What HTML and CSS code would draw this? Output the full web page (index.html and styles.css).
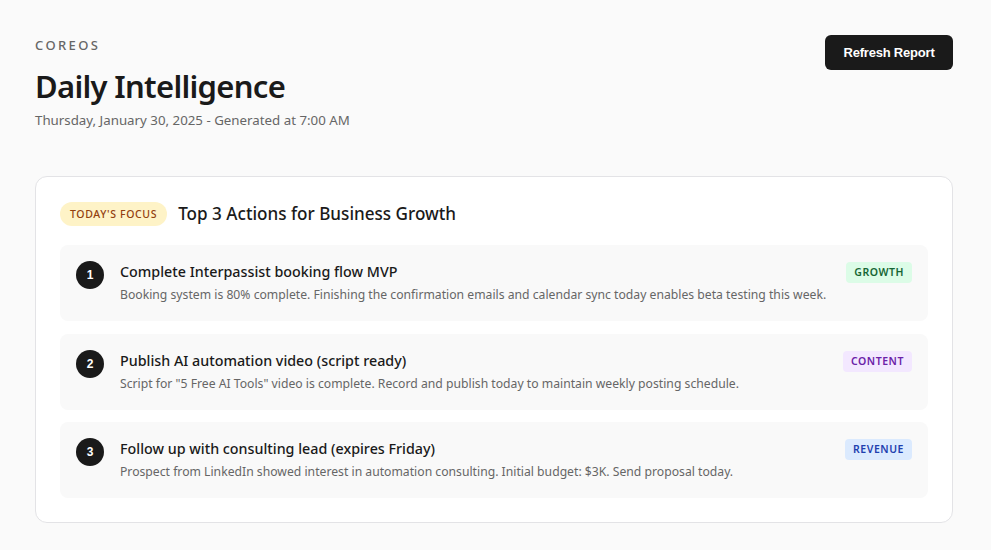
FILE: index.html
```html
<!DOCTYPE html>
<html>
<head>
<meta charset="utf-8">
<link rel="stylesheet" href="styles.css">
</head>
<body>
<div class="page">
  <header class="header">
    <div class="brand">
      <div class="eyebrow">COREOS</div>
      <h1 class="title">Daily Intelligence</h1>
      <div class="subtitle">Thursday, January 30, 2025 - Generated at 7:00 AM</div>
    </div>
    <button class="refresh">Refresh Report</button>
  </header>

  <section class="card">
    <div class="card-head">
      <span class="focus">TODAY'S FOCUS</span>
      <h2 class="card-title">Top 3 Actions for Business Growth</h2>
    </div>
    <div class="actions">
      <div class="action">
        <div class="num">1</div>
        <div class="body">
          <div class="a-title">Complete Interpassist booking flow MVP</div>
          <div class="a-desc">Booking system is 80% complete. Finishing the confirmation emails and calendar sync today enables beta testing this week.</div>
        </div>
        <span class="tag growth">GROWTH</span>
      </div>
      <div class="action">
        <div class="num">2</div>
        <div class="body">
          <div class="a-title">Publish AI automation video (script ready)</div>
          <div class="a-desc">Script for "5 Free AI Tools" video is complete. Record and publish today to maintain weekly posting schedule.</div>
        </div>
        <span class="tag content">CONTENT</span>
      </div>
      <div class="action">
        <div class="num">3</div>
        <div class="body">
          <div class="a-title">Follow up with consulting lead (expires Friday)</div>
          <div class="a-desc">Prospect from LinkedIn showed interest in automation consulting. Initial budget: $3K. Send proposal today.</div>
        </div>
        <span class="tag revenue">REVENUE</span>
      </div>
    </div>
  </section>
</div>
</body>
</html>
```

FILE: styles.css
```css
* { box-sizing: border-box; }
html, body { margin: 0; padding: 0; }
body {
  background: #fafafa;
  font-family: "Noto Sans", "Open Sans", sans-serif;
  color: #1a1a1a;
}
.page {
  padding: 35px 38px 0 35px;
}
.header {
  display: flex;
  justify-content: space-between;
  align-items: flex-start;
}
.eyebrow {
  font-size: 13px;
  letter-spacing: 2.4px;
  color: #666;
  font-weight: 500;
  line-height: 18px;
  margin-top: 1px;
}
.title {
  font-size: 31px;
  font-weight: 600;
  margin: 12px 0 0 0;
  line-height: 40px;
  letter-spacing: -0.7px;
}
.subtitle {
  font-size: 13.3px;
  color: #666;
  margin-top: 4px;
  line-height: 20px;
}
.refresh {
  background: #1a1a1a;
  color: #fff;
  border: none;
  border-radius: 6px;
  width: 128px;
  height: 35px;
  font-family: "Liberation Sans", Arial, sans-serif;
  font-size: 13px;
  font-weight: 700;
  letter-spacing: -0.2px;
}
.card {
  margin-top: 46px;
  background: #fff;
  border: 1px solid #e3e3e6;
  border-radius: 12px;
  padding: 25px 24px 24px 24px;
}
.card-head {
  display: flex;
  align-items: center;
  gap: 11px;
  margin-bottom: 19px;
}
.focus {
  background: #fef3c7;
  color: #92400e;
  font-size: 10.5px;
  font-weight: 500;
  letter-spacing: 0.65px;
  line-height: 24px;
  height: 24px;
  padding: 0 10px;
  border-radius: 12px;
}
.card-title {
  margin: 0;
  font-size: 17.1px;
  font-weight: 500;
  line-height: 24px;
}
.actions {
  display: flex;
  flex-direction: column;
  gap: 12.5px;
}
.action {
  background: #f9f9f9;
  border-radius: 8px;
  padding: 16px;
  display: flex;
  align-items: flex-start;
  gap: 16px;
}
.num {
  flex: none;
  width: 28px;
  height: 28px;
  border-radius: 50%;
  background: #1a1a1a;
  color: #fff;
  font-family: "Liberation Sans", Arial, sans-serif;
  font-weight: 700;
  font-size: 12px;
  display: flex;
  align-items: center;
  justify-content: center;
}
.body { flex: 1; }
.a-title {
  font-size: 14.3px;
  font-weight: 500;
  line-height: 22px;
}
.a-desc {
  font-size: 12.2px;
  color: #666;
  line-height: 20px;
  margin-top: 2px;
}
.tag {
  flex: none;
  font-size: 10.5px;
  font-weight: 600;
  letter-spacing: 0.55px;
  line-height: 21px;
  height: 21px;
  padding: 0 8px;
  border-radius: 4px;
  margin-top: 1px;
}
.growth { background: #dcfce7; color: #166534; }
.content { background: #f3e8ff; color: #6b21a8; }
.revenue { background: #dbeafe; color: #1e40af; }
```
